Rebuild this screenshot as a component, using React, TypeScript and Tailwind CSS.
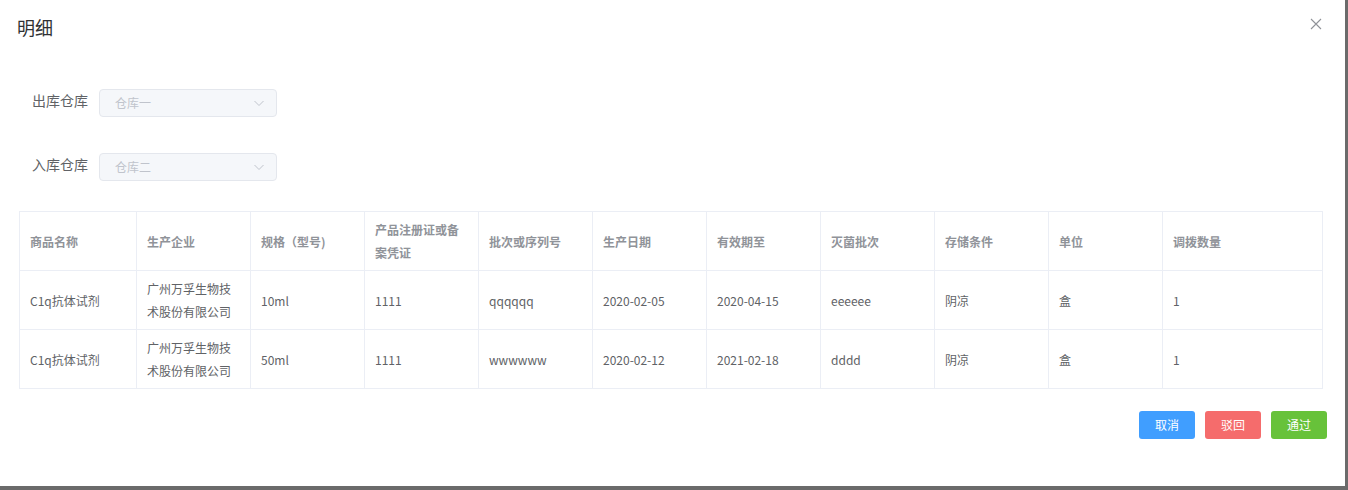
import React from 'react';

const font = { fontFamily: '"Noto Sans CJK SC", "Liberation Sans", sans-serif' };

interface Row {
  name: string;
  maker: string;
  spec: string;
  cert: string;
  batch: string;
  made: string;
  expire: string;
  sterile: string;
  storage: string;
  unit: string;
  qty: string;
}

const rows: Row[] = [
  { name: 'C1q抗体试剂', maker: '广州万孚生物技术股份有限公司', spec: '10ml', cert: '1111', batch: 'qqqqqq', made: '2020-02-05', expire: '2020-04-15', sterile: 'eeeeee', storage: '阴凉', unit: '盒', qty: '1' },
  { name: 'C1q抗体试剂', maker: '广州万孚生物技术股份有限公司', spec: '50ml', cert: '1111', batch: 'wwwwww', made: '2020-02-12', expire: '2021-02-18', sterile: 'dddd', storage: '阴凉', unit: '盒', qty: '1' },
];

const headers = ['商品名称', '生产企业', '规格（型号)', '产品注册证或备案凭证', '批次或序列号', '生产日期', '有效期至', '灭菌批次', '存储条件', '单位', '调拨数量'];
const widths = [117, 114, 114, 114, 114, 114, 114, 114, 114, 114, 160];

const Chevron = () => (
  <svg width="12" height="12" viewBox="0 0 12 12" fill="none">
    <path d="M1.5 4l4.5 4.5L10.5 4" stroke="#c0c4cc" strokeWidth="1" />
  </svg>
);

const SelectBox: React.FC<{ label: string; value: string }> = ({ label, value }) => (
  <div className="flex items-start">
    <span className="w-[67px] pl-[32px] pt-[1px] text-[14px] leading-[20px] text-[#606266] whitespace-nowrap box-content">{label}</span>
    <div className="w-[178px] h-[28px] rounded-[4px] border border-[#e4e7ed] bg-[#f5f7fa] flex items-center justify-between pl-[15px] pr-[11px]">
      <span className="text-[12px] text-[#c0c4cc]">{value}</span>
      <Chevron />
    </div>
  </div>
);

export default function App() {
  return (
    <div className="w-[1348px] h-[490px] bg-[#6b6b6b]" style={font}>
      <div className="w-[1345px] h-[486px] bg-white">
        <div className="flex items-center justify-between pl-[17px] pr-[23px] pt-[15px]">
          <span className="text-[18px] leading-[24px] text-[#303133]">明细</span>
          <svg width="12" height="12" viewBox="0 0 12 12" className="mt-[-7px]">
            <path d="M1 1l10 10M11 1L1 11" stroke="#909399" strokeWidth="1.1" />
          </svg>
        </div>
        <div className="mt-[50px] flex flex-col gap-[36px]">
          <SelectBox label="出库仓库" value="仓库一" />
          <SelectBox label="入库仓库" value="仓库二" />
        </div>
        <div className="mt-[30px] ml-[19px]">
          <table className="table-fixed border-collapse w-[1304px]">
            <colgroup>
              {widths.map((w, i) => (
                <col key={i} style={{ width: w }} />
              ))}
            </colgroup>
            <thead>
              <tr className="h-[59px]">
                {headers.map((h) => (
                  <th key={h} className="border border-[#ebeef5] px-[10px] text-left align-middle text-[12px] leading-[23px] font-bold text-[#909399]">
                    {h}
                  </th>
                ))}
              </tr>
            </thead>
            <tbody>
              {rows.map((r, i) => (
                <tr key={i} className="h-[59px]">
                  {[r.name, r.maker, r.spec, r.cert, r.batch, r.made, r.expire, r.sterile, r.storage, r.unit, r.qty].map((c, j) => (
                    <td key={j} className="border border-[#ebeef5] px-[10px] align-middle text-[12px] leading-[23px] text-[#606266]">
                      {c}
                    </td>
                  ))}
                </tr>
              ))}
            </tbody>
          </table>
        </div>
        <div className="flex justify-end gap-[10px] pr-[18px] mt-[22px]">
          <button className="w-[56px] h-[28px] rounded-[3px] bg-[#409eff] text-white text-[12px]">取消</button>
          <button className="w-[56px] h-[28px] rounded-[3px] bg-[#f56c6c] text-white text-[12px]">驳回</button>
          <button className="w-[56px] h-[28px] rounded-[3px] bg-[#67c23a] text-white text-[12px]">通过</button>
        </div>
      </div>
    </div>
  );
}
